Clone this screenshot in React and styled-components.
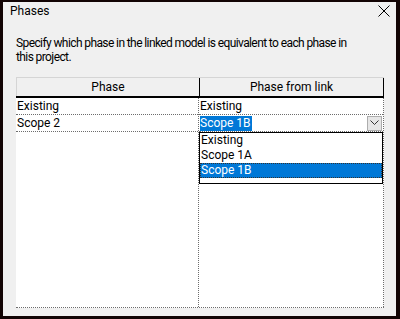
import React from "react";
import styled, { createGlobalStyle } from "styled-components";

const GlobalStyle = createGlobalStyle`
  html, body {
    margin: 0;
    padding: 0;
    background: #120404;
  }
  body {
    font-family: Roboto, "Noto Sans", sans-serif;
    font-size: 12px;
    color: #000;
  }
`;

const Frame = styled.div`
  width: 400px;
  height: 319px;
  box-sizing: border-box;
  padding: 2px 4px 3px 3px;
  background: #120404;
`;

const Dialog = styled.div`
  height: 100%;
  background: #f0f0f0;
  display: flex;
  flex-direction: column;
`;

const TitleBar = styled.div`
  height: 25px;
  box-sizing: border-box;
  display: flex;
  align-items: flex-start;
  justify-content: space-between;
  padding: 1px 5px 0 7px;
`;

const Title = styled.span`
  font-size: 12px;
  line-height: 16px;
`;

const CloseButton = styled.div`
  width: 14px;
  height: 16px;
  padding-top: 2px;
  display: flex;
  justify-content: center;
`;

const Description = styled.p`
  margin: 9px 0 0 13px;
  width: 342px;
  line-height: 14px;
  font-size: 12px;
  letter-spacing: -0.6px;
`;

const Table = styled.div`
  position: relative;
  margin: 13px 0 8px 13px;
  width: 368px;
  flex: 1;
  display: flex;
  flex-direction: column;
`;

const HeaderRow = styled.div`
  display: grid;
  grid-template-columns: 183px 185px;
  height: 18px;
  border-top: 1px solid #d5d5d5;
  border-bottom: 2px solid #000;
  background: #f0f0f0;
`;

const HeaderCell = styled.div`
  display: flex;
  align-items: center;
  justify-content: center;
  border-left: 1px solid ${(p) => (p.$first ? "#d5d5d5" : "#000")};
  border-right: ${(p) => (p.$last ? "1px solid #000" : "none")};
`;

const Body = styled.div`
  flex: 1;
  display: grid;
  grid-template-columns: 183px 185px;
  background: #fff;
  border-bottom: 1px dotted #6d6d6d;
`;

const Column = styled.div`
  display: flex;
  flex-direction: column;
  border-right: 1px dotted #6d6d6d;
`;

const Cell = styled.div`
  height: 16px;
  display: flex;
  align-items: center;
  justify-content: space-between;
  padding-left: 1px;
  border-bottom: 1px dotted #6d6d6d;
`;

const Selected = styled.span`
  background: ${(p) => (p.$active ? "#0078d7" : "transparent")};
  color: ${(p) => (p.$active ? "#fff" : "#000")};
  line-height: 15px;
  padding-right: 1px;
`;

const ArrowButton = styled.div`
  width: 13px;
  height: 13px;
  margin-right: 1px;
  border: 1px solid #adadad;
  background: #e6e6e6;
  display: flex;
  align-items: center;
  justify-content: center;
`;

const DropList = styled.div`
  position: absolute;
  left: 183px;
  top: 55px;
  width: 182px;
  height: 50px;
  background: #fff;
  border: 1px solid #000;
`;

const Option = styled.div`
  height: 15px;
  line-height: 15px;
  padding-left: 1px;
  background: ${(p) => (p.$active ? "#0078d7" : "transparent")};
  color: ${(p) => (p.$active ? "#fff" : "#000")};
  outline: ${(p) => (p.$active ? "1px dotted #333" : "none")};
  outline-offset: -1px;
`;

const rows = [
  { phase: "Existing", link: "Existing" },
  { phase: "Scope 2", link: "Scope 1B", editing: true },
];

const options = ["Existing", "Scope 1A", "Scope 1B"];

export default function App() {
  return (
    <>
      <GlobalStyle />
      <Frame>
        <Dialog>
          <TitleBar>
            <Title>Phases</Title>
            <CloseButton>
              <svg width="12" height="12" viewBox="0 0 12 12">
                <path d="M0.5 0.5 L11.5 11.5 M11.5 0.5 L0.5 11.5" stroke="#000" strokeWidth="1" />
              </svg>
            </CloseButton>
          </TitleBar>
          <Description>
            Specify which phase in the linked model is equivalent to each phase in this project.
          </Description>
          <Table>
            <HeaderRow>
              <HeaderCell $first>Phase</HeaderCell>
              <HeaderCell $last>Phase from link</HeaderCell>
            </HeaderRow>
            <Body>
              <Column>
                {rows.map((r) => (
                  <Cell key={r.phase}>{r.phase}</Cell>
                ))}
              </Column>
              <Column>
                {rows.map((r) => (
                  <Cell key={r.phase}>
                    <Selected $active={r.editing}>{r.link}</Selected>
                    {r.editing && (
                      <ArrowButton>
                        <svg width="9" height="6" viewBox="0 0 9 6">
                          <path d="M0.5 0.5 L4.5 4.5 L8.5 0.5" fill="none" stroke="#333" strokeWidth="1" />
                        </svg>
                      </ArrowButton>
                    )}
                  </Cell>
                ))}
              </Column>
            </Body>
            <DropList>
              {options.map((o) => (
                <Option key={o} $active={o === "Scope 1B"}>
                  {o}
                </Option>
              ))}
            </DropList>
          </Table>
        </Dialog>
      </Frame>
    </>
  );
}
